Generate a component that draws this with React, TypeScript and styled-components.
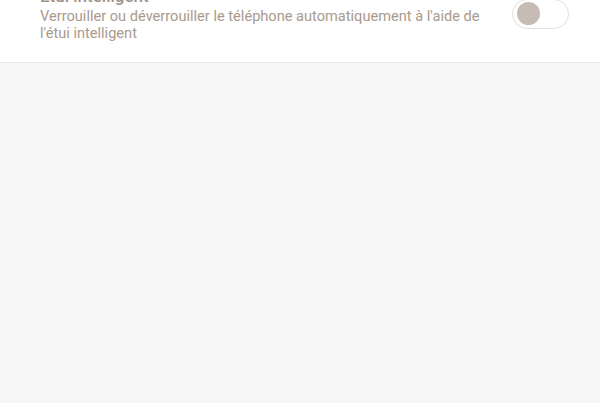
import React from "react";
import styled, { createGlobalStyle } from "styled-components";

const Global = createGlobalStyle`
  html, body { margin: 0; padding: 0; background: #f6f6f6; }
  body { font-family: Roboto, "Noto Sans", sans-serif; overflow: hidden; }
`;

const Page = styled.div`
  width: 600px;
  height: 403px;
  background: #f6f6f6;
  overflow: hidden;
`;

const Section = styled.section`
  background: #ffffff;
  border-bottom: 1px solid #e8e8e8;
  padding: 0 31px 20px 40px;
`;

const Row = styled.div`
  display: flex;
  align-items: center;
  gap: 24px;
  margin-top: -15px;
`;

const TextBlock = styled.div`
  flex: 1;
  display: flex;
  flex-direction: column;
  gap: 1px;
`;

const Title = styled.div`
  font-size: 17px;
  line-height: 22px;
  color: #a09288;
  font-weight: 500;
`;

const Desc = styled.div`
  font-size: 14.6px;
  line-height: 17px;
  color: #a99a8d;
  max-width: 450px;
`;

const Toggle = styled.div<{ $on: boolean }>`
  width: 57px;
  height: 30px;
  box-sizing: border-box;
  border: 1px solid #e3dedb;
  border-radius: 15px;
  background: #ffffff;
  display: flex;
  align-items: center;
  padding: 0 4px;
  justify-content: ${(p) => (p.$on ? "flex-end" : "flex-start")};
  flex-shrink: 0;
`;

const Thumb = styled.div`
  width: 23px;
  height: 23px;
  border-radius: 50%;
  background: #c6bcb5;
`;

export default function App() {
  return (
    <Page>
      <Global />
      <Section>
        <Row>
          <TextBlock>
            <Title>Étui intelligent</Title>
            <Desc>
              Verrouiller ou déverrouiller le téléphone automatiquement à l'aide de l'étui intelligent
            </Desc>
          </TextBlock>
          <Toggle $on={false}>
            <Thumb />
          </Toggle>
        </Row>
      </Section>
    </Page>
  );
}
